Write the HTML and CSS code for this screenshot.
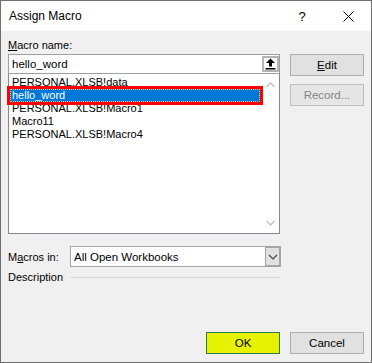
FILE: index.html
```html
<!DOCTYPE html>
<html lang="en">
<head>
    <meta charset="UTF-8">
    <title>Assign Macro</title>
    <link rel="stylesheet" href="styles.css">
</head>
<body>
    <div class="dialog">
        <!-- title bar -->
        <div class="titlebar">
            <span class="title">Assign Macro</span>
            <span class="title-btn help">?</span>
            <span class="title-btn close">
                <svg width="11" height="11" viewBox="0 0 11 11"><path d="M0.5 0.5 L10.5 10.5 M10.5 0.5 L0.5 10.5" stroke="#000" stroke-width="1" fill="none"/></svg>
            </span>
        </div>

        <div class="content">
            <div class="top">
                <div class="left">
                    <div class="label"><u>M</u>acro name:</div>
                    <div class="name-box">
                        <span class="name-text">hello_word</span>
                        <span class="pick-btn">
                            <svg width="11" height="12" viewBox="0 0 11 12"><path d="M5.5 0.5 L10 5 H7 V8.5 H4 V5 H1 Z" fill="#000"/><rect x="0.5" y="10" width="10" height="1.5" fill="#000"/></svg>
                        </span>
                    </div>
                    <div class="list">
                        <div class="items">
                            <div class="item">PERSONAL.XLSB!data</div>
                            <div class="item selected">hello_word</div>
                            <div class="item">PERSONAL.XLSB!Macro1</div>
                            <div class="item">Macro11</div>
                            <div class="item">PERSONAL.XLSB!Macro4</div>
                        </div>
                        <div class="scroll">
                            <svg width="9" height="6" viewBox="0 0 9 6"><path d="M0.5 5 L4.5 1 L8.5 5" stroke="#c2c2c2" stroke-width="1.5" fill="none"/></svg>
                            <svg width="9" height="6" viewBox="0 0 9 6"><path d="M0.5 1 L4.5 5 L8.5 1" stroke="#c2c2c2" stroke-width="1.5" fill="none"/></svg>
                        </div>
                    </div>
                </div>
                <div class="side">
                    <button class="btn"><u>E</u>dit</button>
                    <button class="btn disabled">Record...</button>
                </div>
            </div>

            <div class="macros-in">
                <span class="macros-label">M<u>a</u>cros in:</span>
                <div class="select">
                    <span class="select-text">All Open Workbooks</span>
                    <span class="drop-btn">
                        <svg width="10" height="6" viewBox="0 0 10 6"><path d="M1 1 L5 5 L9 1" stroke="#444" stroke-width="1.2" fill="none"/></svg>
                    </span>
                </div>
            </div>

            <div class="desc">
                <span>Description</span>
                <span class="rule"></span>
            </div>

            <div class="footer">
                <button class="btn ok">OK</button>
                <button class="btn">Cancel</button>
            </div>
        </div>
    </div>
</body>
</html>
```

FILE: styles.css
```css
body {
    margin: 0;
    font-family: "Segoe UI", "Liberation Sans", Arial, sans-serif;
    font-size: 11px;
    color: #000;
    background: #f0f0f0;
}
.dialog {
    width: 372px;
    height: 363px;
    box-sizing: border-box;
    border: 1px solid #707070;
    background: #f0f0f0;
    display: flex;
    flex-direction: column;
}

/* title bar */
.titlebar {
    height: 30px;
    background: #fff;
    display: flex;
    align-items: center;
}
.title {
    font-size: 12px;
    padding-left: 8px;
    flex: 1;
}
.title-btn {
    width: 46px;
    height: 30px;
    display: flex;
    align-items: center;
    justify-content: center;
}
.help {
    font-size: 13px;
    padding-top: 1px;
}

.content {
    flex: 1;
    display: flex;
    flex-direction: column;
    padding: 7px 7px 8px 7px;
}
.top {
    display: flex;
    gap: 10px;
}
.left {
    width: 272px;
    display: flex;
    flex-direction: column;
}
.label {
    height: 15px;
    line-height: 15px;
    margin-bottom: 1px;
}
.name-box {
    height: 20px;
    box-sizing: border-box;
    border: 1px solid #a0a0a0;
    background: #fff;
    display: flex;
    align-items: center;
}
.name-text {
    flex: 1;
    padding-left: 3px;
    font-size: 11.5px;
}
.pick-btn {
    width: 13px;
    height: 12px;
    border: 2px solid #b4b4b4;
    background: #fbfbfb;
    margin-right: 0;
    display: flex;
    align-items: center;
    justify-content: center;
}
.list {
    height: 160px;
    box-sizing: border-box;
    border: 1px solid #828790;
    border-top: 0;
    background: #fff;
    display: flex;
}
.items {
    flex: 1;
    padding: 2px 2px 0 1px;
}
.item {
    height: 13px;
    line-height: 13px;
    padding-left: 2px;
    white-space: nowrap;
}
.item.selected {
    background: #0078d7;
    color: #fff;
    box-sizing: border-box;
    border: 1px dotted #f7c27a;
    padding-left: 1px;
    line-height: 11px;
    outline: 3px solid #ff0000;
}
.scroll {
    width: 17px;
    display: flex;
    flex-direction: column;
    justify-content: space-between;
    align-items: center;
    padding: 8px 0 7px;
}

.side {
    width: 74px;
    display: flex;
    flex-direction: column;
    gap: 8px;
    padding-top: 16px;
}
.btn {
    height: 22px;
    width: 74px;
    box-sizing: border-box;
    border: 1px solid #adadad;
    background: #e1e1e1;
    font-family: inherit;
    font-size: 11.5px;
    color: #000;
    padding: 0;
}
.btn.disabled {
    color: #838383;
    border-color: #bfbfbf;
    background: #e6e6e6;
}
.btn.ok {
    background: #e6f200;
    border: 1px solid #2b7a4b;
}

/* macros in row */
.macros-in {
    width: 273px;
    display: flex;
    align-items: center;
    margin-top: 12px;
}
.macros-label {
    width: 62px;
}
.select {
    flex: 1;
    height: 21px;
    box-sizing: border-box;
    border: 1px solid #a5a5a5;
    background: #fff;
    display: flex;
    align-items: center;
}
.select-text {
    flex: 1;
    padding-left: 3px;
    font-size: 11.5px;
}
.drop-btn {
    width: 16px;
    height: 21px;
    box-sizing: border-box;
    margin: -1px -1px -1px 0;
    border: 2px solid #a5a5a5;
    border-left-width: 1px;
    background: #e1e1e1;
    display: flex;
    align-items: center;
    justify-content: center;
}

.desc {
    width: 273px;
    display: flex;
    align-items: center;
    margin-top: 3px;
    height: 14px;
}
.rule {
    flex: 1;
    height: 1px;
    background: #dadada;
    margin-left: 7px;
}

.footer {
    margin-top: auto;
    display: flex;
    justify-content: flex-end;
    gap: 10px;
}
```
